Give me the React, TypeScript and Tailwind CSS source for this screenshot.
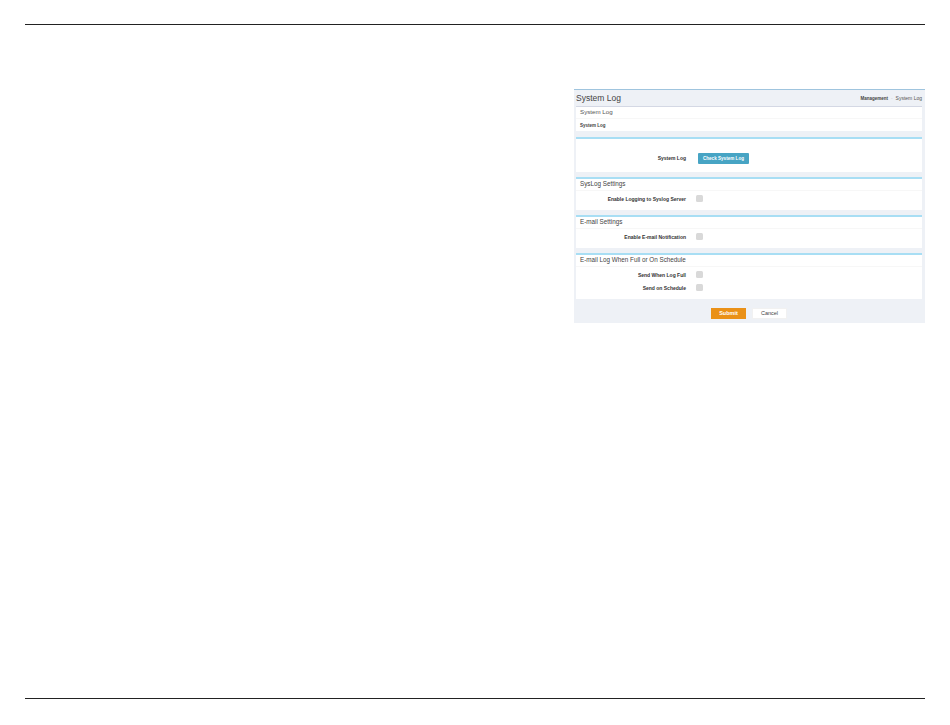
const font = { fontFamily: '"Liberation Sans", Arial, sans-serif' };

function Row({ label, children, className = "" }: { label: string; children: React.ReactNode; className?: string }) {
  return (
    <div className={`flex items-center ${className}`}>
      <span className="w-[110px] text-right text-[5px] leading-[8px] font-bold text-[#333]">{label}</span>
      <div className="ml-[10px] flex items-center">{children}</div>
    </div>
  );
}

function Check() {
  return <span className="block h-[7px] w-[7px] rounded-[1.5px] bg-[#d9d9d9]" />;
}

function Section({ title, children, className = "" }: { title: string; children: React.ReactNode; className?: string }) {
  return (
    <section className={`bg-white border-t-2 border-[#a8def4] ${className}`}>
      <h3 className="h-[12px] border-b border-[#f7f7f7] pl-[4px] text-[6.3px] leading-[9px] font-normal text-[#444]">{title}</h3>
      {children}
    </section>
  );
}

export default function App() {
  return (
    <main className="flex h-[725px] w-[950px] flex-col bg-white px-[25px]" style={font}>
      <div className="mt-[24px] h-px bg-[#222]" />

      <div className="flex flex-1 items-start justify-end pt-[64px]">
        <div className="h-[234px] w-[351px] border-t border-[#9fc4de] bg-[#eef1f6] pl-[2px] pr-[3px]">
          {/* Header */}
          <header className="flex h-[16px] items-center justify-between">
            <h1 className="text-[8.5px] font-normal leading-[14px] text-[#444]">System Log</h1>
            <nav className="flex items-baseline pt-[2px] text-[5px] text-[#555]">
              <span className="text-[4.5px] font-bold text-[#444]">Management</span>
              <span className="mx-[3px] text-[#ccc]">-</span>
              <span>System Log</span>
            </nav>
          </header>

          <section className="h-[25px] border-t border-[#d4d8e4] bg-white">
            <h2 className="h-[12px] border-b border-[#f7f7f7] pl-[4px] text-[6.2px] leading-[10px] font-normal text-[#555]">System Log</h2>
            <p className="pl-[4px] pt-[3px] text-[4.5px] font-bold leading-[8px] text-[#444]">System Log</p>
          </section>

          <section className="mt-[6px] h-[35px] border-t-2 border-[#a8def4] bg-white pt-[13px]">
            <Row label="System Log" className="h-[11px]">
              <button className="ml-[2px] mt-px h-[11px] w-[51px] rounded-[1px] bg-[#47a4c4] text-center text-[4.6px] font-bold leading-[11px] text-white">
                Check System Log
              </button>
            </Row>
          </section>

          <Section title="SysLog Settings" className="mt-[5px] h-[33px]">
            <Row label="Enable Logging to Syslog Server" className="mt-px h-[13px]">
              <Check />
            </Row>
          </Section>

          <Section title="E-mail Settings" className="mt-[5px] h-[33px]">
            <Row label="Enable E-mail Notification" className="mt-px h-[13px]">
              <Check />
            </Row>
          </Section>

          <Section title="E-mail Log When Full or On Schedule" className="mt-[5px] h-[46px]">
            <Row label="Send When Log Full" className="mt-px h-[13px]">
              <Check />
            </Row>
            <Row label="Send on Schedule" className="h-[13px]">
              <Check />
            </Row>
          </Section>

          {/* Buttons */}
          <div className="mt-[9px] flex pl-[135px]">
            <button className="h-[11px] w-[35px] bg-[#ea9118] text-center text-[5.5px] font-bold leading-[11px] text-white">Submit</button>
            <button className="ml-[6px] h-[11px] w-[35px] border border-[#f1f1f1] bg-white text-center text-[5.5px] leading-[9px] text-[#444]">Cancel</button>
          </div>
        </div>
      </div>

      <div className="mb-[26px] h-px bg-[#222]" />
    </main>
  );
}
